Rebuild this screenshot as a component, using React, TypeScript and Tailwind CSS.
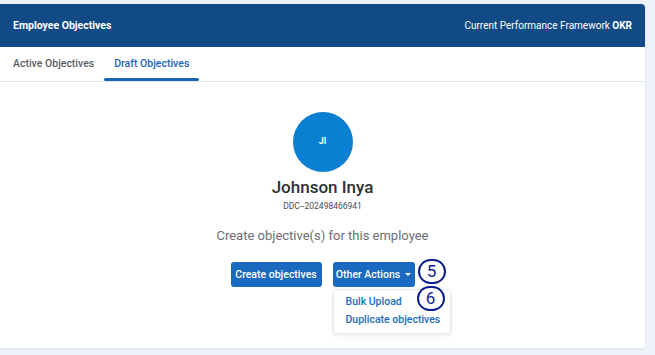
import React from "react";

export default function App() {
  return (
    <div className="w-[655px] h-[355px] bg-[#eef2f9] pt-[4px] pr-[10px] pb-[7px] overflow-hidden" style={{ fontFamily: "Roboto, 'Noto Sans', sans-serif" }}>
      <div className="h-full bg-white rounded-r-[4px] shadow-[0_1px_3px_rgba(0,0,0,0.06)] flex flex-col">
        <div className="h-[43px] bg-[#124a85] rounded-tr-[4px] flex items-center justify-between px-[13px] text-white">
          <span className="font-bold text-[10.5px]">Employee Objectives</span>
          <span className="text-[10px]">Current Performance Framework <b>OKR</b></span>
        </div>
        <div className="h-[35px] border-b border-[#e4e9f0] flex items-end px-[3px] text-[10.5px] font-medium">
          <div className="px-[10px] h-full flex items-center text-[#5a5f66]">Active Objectives</div>
          <div className="relative px-[10px] h-full flex items-center text-[#1a64b8]">
            Draft Objectives
            <div className="absolute left-0 right-0 bottom-[0px] h-[3px] rounded-full bg-[#1a64b8]" />
          </div>
        </div>
        <div className="flex flex-col items-center pt-[30px]">
          <div className="w-[60px] h-[60px] rounded-full bg-[#0b7fd1] flex items-center justify-center text-white text-[9px] font-bold">JI</div>
          <div className="mt-[2px] text-[17px] font-medium text-[#2e3136] leading-[26px]">Johnson Inya</div>
          <div className="text-[8.5px] text-[#4a4d52] leading-[12px]">DDC--202498466941</div>
          <div className="mt-[14px] text-[13px] text-[#6b6e73] leading-[20px]">Create objective(s) for this employee</div>
          <div className="mt-[16px] flex gap-[11px]">
            <button className="h-[25px] w-[91px] rounded-[3px] bg-[#1a6abf] text-white text-[10.5px] font-medium whitespace-nowrap">Create objectives</button>
            <div className="relative">
              <button className="h-[25px] w-[82px] justify-center rounded-[3px] bg-[#1a6abf] text-white text-[10.5px] font-medium flex items-center gap-[5px] whitespace-nowrap">
                Other Actions
                <span className="w-0 h-0 border-l-[3px] border-r-[3px] border-t-[3px] border-l-transparent border-r-transparent border-t-white" />
              </button>
              <div className="absolute left-[85px] top-[-3px] w-[28px] h-[25px] rounded-full border-[2.5px] border-[#0b1f8c] flex items-center justify-center text-[17px] text-[#0b1f8c] bg-white leading-none">5</div>
              <div className="absolute left-0 top-[27px] w-[118px] bg-white border border-[#e4e9f0] rounded-[3px] shadow-[0_2px_6px_rgba(0,0,0,0.08)] pt-[3px] pb-[4px] px-[12px] text-[10.5px] font-medium text-[#1e6bb8] whitespace-nowrap">
                <div className="leading-[18px]">Bulk Upload</div>
                <div className="leading-[18px]">Duplicate objectives</div>
              </div>
              <div className="absolute left-[84px] top-[24px] w-[28px] h-[25px] rounded-full border-[2.5px] border-[#0b1f8c] flex items-center justify-center text-[17px] text-[#0b1f8c] bg-white leading-none">6</div>
            </div>
          </div>
        </div>
      </div>
    </div>
  );
}
